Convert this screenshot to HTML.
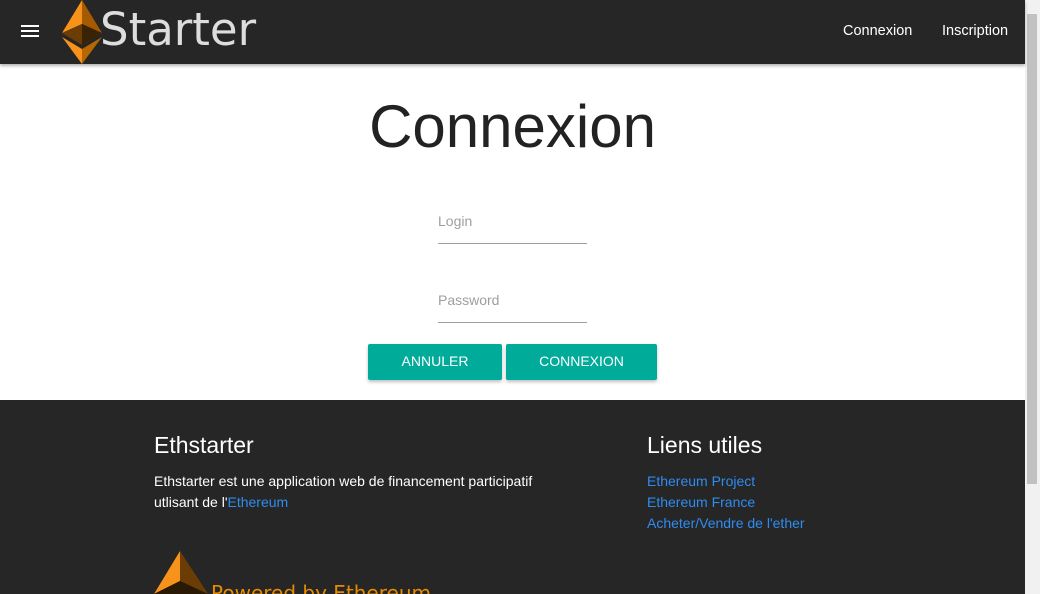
<!DOCTYPE html>
<html style="overflow:hidden;height:594px"><head><style>
body{margin:0;width:1040px;height:594px;overflow:hidden;font-family:"Liberation Sans",sans-serif;background:#fff;position:relative}
.nav{position:absolute;left:0;top:0;width:1025px;height:64px;background:#262626;box-shadow:0 2px 3px rgba(0,0,0,.3);z-index:2}
.nav a{position:absolute;top:23px;color:#fff;font-size:14.5px}
.sb{position:absolute;left:1025px;top:0;width:15px;height:594px;background:#f1f1f1}
.sb div{position:absolute;left:2px;top:14px;width:10px;height:470px;background:#c1c1c1}
h1{position:absolute;left:0;width:1025px;top:92px;margin:0;text-align:center;font-weight:400;font-size:60px;color:#222}
.inp{position:absolute;left:438px;width:149px;border-bottom:1px solid #9e9e9e;color:#9e9e9e;font-size:14px;height:30px}
.btn{position:absolute;top:344px;height:36px;background:#00ab9a;color:#fff;font-size:14px;text-align:center;line-height:34px;border-radius:2px;box-shadow:0 2px 3px rgba(0,0,0,.25)}
.foot{position:absolute;left:0;top:400px;width:1025px;height:194px;background:#262626;color:#fff;overflow:hidden}
.foot h2{position:absolute;margin:0;font-weight:400;font-size:23px}
.foot p{position:absolute;margin:0;font-size:14px;line-height:21px}
.foot a{color:#2f8cf0}
</style></head><body>
<div class="nav">
<div style="position:absolute;left:21px;top:25px;width:18px;height:2px;background:#fff;box-shadow:0 5px 0 #fff,0 10px 0 #fff"></div>
<svg style="position:absolute;left:62px;top:0" width="42" height="64" viewBox="0 0 42 64">
<polygon points="20,0 0,33 20,24" fill="#f7931a"/><polygon points="20,0 40,33 20,24" fill="#a65a00"/>
<polygon points="0,33 20,24 40,33 20,45" fill="#6b3d05"/><polygon points="20,24 40,33 20,45" fill="#3a2305"/>
<polygon points="0,37 20,49 20,64" fill="#f7931a"/><polygon points="40,37 20,49 20,64" fill="#b86600"/>
</svg>
<div style="position:absolute;left:100px;top:3px;font-family:'DejaVu Sans',sans-serif;font-size:45px;color:#ddd">Starter</div>
<a style="left:843px">Connexion</a><a style="left:942px">Inscription</a>
</div>
<h1>Connexion</h1>
<div class="inp" style="top:213px">Login</div>
<div class="inp" style="top:292px">Password</div>
<div class="btn" style="left:368px;width:134px">ANNULER</div>
<div class="btn" style="left:506px;width:151px">CONNEXION</div>
<div class="foot">
<h2 style="left:154px;top:32px">Ethstarter</h2>
<p style="left:154px;top:71px">Ethstarter est une application web de financement participatif<br>utlisant de l'<a>Ethereum</a></p>
<h2 style="left:647px;top:32px">Liens utiles</h2>
<p style="left:647px;top:71px"><a>Ethereum Project</a><br><a>Ethereum France</a><br><a>Acheter/Vendre de l'ether</a></p>
<svg style="position:absolute;left:154px;top:151px" width="54" height="43"><polygon points="26,0 0,43 26,30" fill="#f7931a"/><polygon points="26,0 54,43 26,30" fill="#6b3d05"/><polygon points="0,43 26,30 54,43" fill="#2a1a05"/></svg>
<div style="position:absolute;left:211px;top:181px;font-family:'DejaVu Sans',sans-serif;font-size:20px;color:#e68a00">Powered by Ethereum</div>
</div>
<div class="sb"><div></div></div>
</body></html>
